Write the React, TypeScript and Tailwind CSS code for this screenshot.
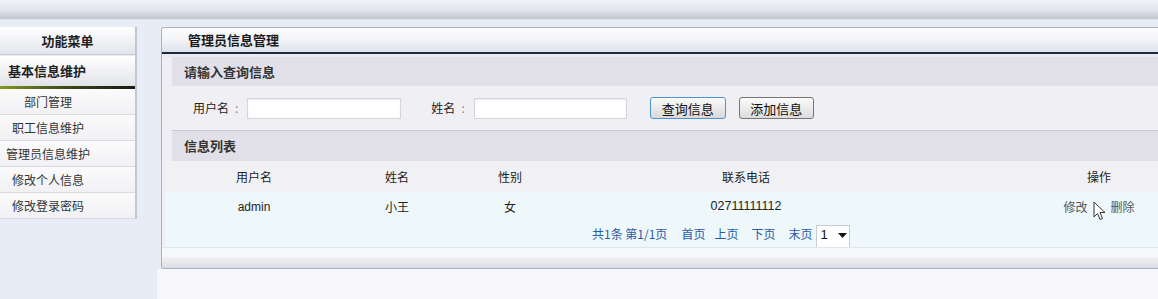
import React from "react";

const cjk = '"Noto Sans CJK SC", "Liberation Sans", sans-serif';
const latin = '"Liberation Sans", "Noto Sans CJK SC", sans-serif';

function MenuItem({ label }: { label: string }) {
  return (
    <div className="h-[26px] flex items-center border-b border-[#dadbe0] bg-gradient-to-b from-[#fbfbfc] to-[#f1f1f4]">
      <span className="w-[96px] text-center text-[12px] text-[#333]">{label}</span>
    </div>
  );
}

function Cursor() {
  return (
    <svg width="13" height="20" viewBox="0 0 13 20" className="mx-[5px] mt-[8px]">
      <path d="M1 1 L1 16 L4.5 12.5 L7 18.5 L9.5 17.5 L7 11.5 L12 11.5 Z" fill="#fff" stroke="#333" strokeWidth="1" strokeLinejoin="round" />
    </svg>
  );
}

export default function App() {
  return (
    <div className="w-[1158px] h-[299px] overflow-hidden bg-[#e8ecf6] flex flex-col" style={{ fontFamily: cjk }}>
      <div className="h-[20px] shrink-0 bg-gradient-to-b from-[#f2f3f8] via-[#e2e5ed] to-[#c2c6d2] border-b border-[#e4e7f0]" />
      <div className="flex flex-1 pt-[7px]">
        {/* left menu */}
        <aside className="w-[137px] shrink-0 flex flex-col self-start border-r-2 border-[#c2c6d0]">
          <div className="h-[28px] flex items-center justify-center bg-gradient-to-b from-[#ffffff] to-[#e3e5eb] border-b border-[#c6c9d2] rounded-tr-[3px]">
            <span className="text-[13px] font-bold text-[#222]">功能菜单</span>
          </div>
          <div className="h-[30px] mt-[1px] flex items-center pl-[8px] bg-gradient-to-b from-[#ffffff] to-[#e1e3e9]">
            <span className="text-[13px] font-bold text-[#222]">基本信息维护</span>
          </div>
          <div className="h-[3px] bg-gradient-to-r from-[#7e9c1c] via-[#39481a] to-[#141a12]" />
          <MenuItem label="部门管理" />
          <MenuItem label="职工信息维护" />
          <MenuItem label="管理员信息维护" />
          <MenuItem label="修改个人信息" />
          <MenuItem label="修改登录密码" />
        </aside>
        <div className="w-[20px] shrink-0" />
        {/* main */}
        <main className="flex-1 flex flex-col min-w-0">
          <div className="ml-[4px] h-[242px] shrink-0 border-l border-t border-b border-[#a9b0bf] rounded-tl-[3px] rounded-bl-[3px] bg-[#eeeef3] flex flex-col overflow-hidden">
            <div className="h-[24px] flex items-center pl-[26px] bg-gradient-to-b from-[#fbfbfd] via-[#f3f4f7] to-[#dbe2e8]">
              <span className="text-[13px] font-bold text-[#1a1a1a]">管理员信息管理</span>
            </div>
            <div className="h-[2px] bg-[#1d2d40]" />
            <div className="h-[3px] bg-[#e9e9ee]" />
            <div className="ml-[10px] flex flex-col">
              <div className="h-[29px] flex items-center pl-[12px] bg-[#e1e0e9]">
                <span className="text-[13px] font-bold text-[#333]">请输入查询信息</span>
              </div>
              <div className="h-[45px] flex items-center bg-[#f0eff4] border-b border-[#cacad2] text-[12px] text-[#222]">
                <span className="ml-[21px]">用户名</span>
                <span className="ml-[6px] text-[#888]">:</span>
                <div className="ml-[9px] w-[154px] h-[21px] bg-white border border-[#d4d4da] shadow-[inset_0_1px_2px_rgba(0,0,0,0.08)]" />
                <span className="ml-[30px]">姓名</span>
                <span className="ml-[6px] text-[#888]">:</span>
                <div className="ml-[9px] w-[153px] h-[21px] bg-white border border-[#d4d4da] shadow-[inset_0_1px_2px_rgba(0,0,0,0.08)]" />
                <button className="ml-[23px] w-[76px] h-[22px] rounded-[3px] border border-[#4a94d0] bg-gradient-to-b from-[#fbfbfb] to-[#d9d9db] text-[13px] text-[#111] leading-none">
                  查询信息
                </button>
                <button className="ml-[13px] w-[75px] h-[22px] rounded-[3px] border border-[#767676] bg-gradient-to-b from-[#fbfbfb] to-[#dcdcde] text-[13px] text-[#111] leading-none">
                  添加信息
                </button>
              </div>
              <div className="h-[30px] flex items-center pl-[12px] bg-[#e1e0e9]">
                <span className="text-[13px] font-bold text-[#333]">信息列表</span>
              </div>
            </div>
            <div className="ml-[3px] flex flex-col">
              <div className="h-[31px] grid grid-cols-[178px_108px_118px_354px_352px] items-center bg-[#f1f1f4] text-[12px] text-[#222]">
                <span className="text-center">用户名</span>
                <span className="text-center">姓名</span>
                <span className="text-center">性别</span>
                <span className="text-center">联系电话</span>
                <span className="text-center">操作</span>
              </div>
              <div className="h-[29px] grid grid-cols-[178px_108px_118px_354px_352px] items-center bg-[#eef8fa] text-[12px] text-[#222]">
                <span className="text-center" style={{ fontFamily: latin }}>admin</span>
                <span className="text-center">小王</span>
                <span className="text-center">女</span>
                <span className="text-center text-[12.5px]" style={{ fontFamily: latin }}>02711111112</span>
                <div className="flex items-center justify-center h-full text-[#555]">
                  <span>修改</span>
                  <Cursor />
                  <span>删除</span>
                </div>
              </div>
              <div className="h-[26px] flex items-end pb-[4px] pl-[427px] bg-[#eef8fa] text-[12px] text-[#2b5aa8]">
                <span>共1条 第1/1页</span>
                <span className="ml-[14px]">首页</span>
                <span className="ml-[9px]">上页</span>
                <span className="ml-[13px]">下页</span>
                <span className="ml-[13px]">末页</span>
                <div className="ml-[4px] mb-[-4px] w-[34px] h-[22px] bg-white border border-[#c8ccd4] border-b-0 flex items-start pt-[2px] pl-[3px] text-[#111]" style={{ fontFamily: latin }}>
                  <span className="text-[13px] leading-none">1</span>
                  <svg width="9" height="6" viewBox="0 0 9 6" className="ml-[10px] mt-[5px]"><path d="M0 0 L9 0 L4.5 5 Z" fill="#111" /></svg>
                </div>
              </div>
            </div>
            <div className="h-[10px] bg-[#f5f9fb] border-t border-[#e2e6ea]" />
            <div className="flex-1 bg-gradient-to-b from-[#f2f2f5] to-[#dcdce4]" />
          </div>
          <div className="flex-1 bg-[#f8f7fa]" />
        </main>
      </div>
    </div>
  );
}
